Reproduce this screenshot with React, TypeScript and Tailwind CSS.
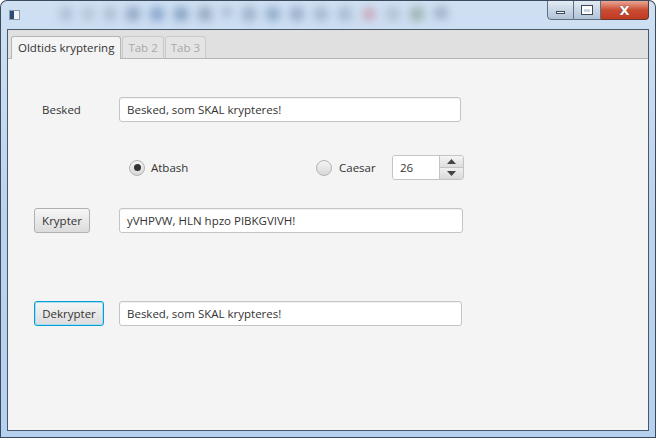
import React from "react";

const font = { fontFamily: '"Open Sans", "Noto Sans", sans-serif' };

function TextField({ value, w }: { value: string; w: string }) {
  return (
    <div
      className={`${w} h-[25px] flex items-center pl-[7px] bg-white border border-[#c4c4c4] rounded-[3px] shadow-[inset_0_1px_1px_rgba(0,0,0,0.06)] text-[11.5px] text-[#333333]`}
    >
      {value}
    </div>
  );
}

function Button({ label, w, focused }: { label: string; w: string; focused?: boolean }) {
  return (
    <div
      className={`${w} h-[25px] flex items-center justify-center rounded-[3px] text-[11.5px] text-[#333333] bg-gradient-to-b from-[#f6f6f6] to-[#dcdcdc] ${
        focused
          ? "border border-[#039ed3] shadow-[inset_0_0_0_1px_#a9dcf0]"
          : "border border-[#b0b0b0]"
      }`}
    >
      {label}
    </div>
  );
}

function Radio({ checked }: { checked?: boolean }) {
  return (
    <div className="w-[16px] h-[16px] shrink-0 rounded-full border border-[#b4b4b4] bg-gradient-to-b from-[#f4f4f4] to-[#d8d8d8] flex items-center justify-center">
      {checked && <div className="w-[7px] h-[7px] rounded-full bg-[#333333]" />}
    </div>
  );
}

export default function App() {
  return (
    <div className="w-[656px] h-[438px] bg-[#3b4a5c] p-[1px] rounded-t-[7px] overflow-hidden" style={font}>
      <div className="w-full h-full rounded-t-[6px] bg-gradient-to-b from-[#cfe0f3] via-[#bcd3ee] to-[#b6d1ef] flex flex-col">
        {/* title bar */}
        <div className="h-[28px] flex items-start relative overflow-hidden">
          <div className="mt-[9px] ml-[8px] w-[11px] h-[10px] flex border border-[#8a9aa8] bg-white">
            <div className="w-[4px] h-full bg-[#2c4c78]" />
            <div className="flex-1 bg-[#f2f4f5]" />
          </div>
          <div className="ml-[40px] mt-[6px] flex gap-[10px] blur-[4px] opacity-60">
            <div className="w-[12px] h-[14px] bg-[#9aaac0] rounded-sm" />
            <div className="w-[12px] h-[14px] bg-[#a5b4c8] rounded-sm" />
            <div className="w-[12px] h-[14px] bg-[#9aaac0] rounded-sm" />
            <div className="w-[14px] h-[14px] bg-[#6d86a8] rounded-sm" />
            <div className="w-[14px] h-[14px] bg-[#5f84b8] rounded-sm" />
            <div className="w-[14px] h-[14px] bg-[#5f7fa8] rounded-sm" />
            <div className="w-[14px] h-[14px] bg-[#778aa2] rounded-sm" />
            <div className="w-[10px] h-[10px] bg-[#8da0ba] rounded-sm" />
            <div className="w-[14px] h-[14px] bg-[#7e96b0] rounded-sm" />
            <div className="w-[14px] h-[14px] bg-[#6d8fb2] rounded-sm" />
            <div className="w-[14px] h-[14px] bg-[#7b8fb0] rounded-sm" />
            <div className="w-[14px] h-[14px] bg-[#8aa0bb] rounded-sm" />
            <div className="w-[14px] h-[14px] bg-[#93a6bf] rounded-sm" />
            <div className="w-[14px] h-[14px] bg-[#c8879a] rounded-full" />
            <div className="w-[14px] h-[14px] bg-[#a0b0c4] rounded-sm" />
            <div className="w-[14px] h-[14px] bg-[#7e9a88] rounded-sm" />
            <div className="w-[14px] h-[12px] bg-[#8193ad] rounded-sm" />
          </div>
          <div className="ml-auto mr-[6px] flex h-[20px] -mt-[1px]">
            <div className="w-[27px] h-[20px] border border-[#5f6f82] rounded-bl-[4px] bg-gradient-to-b from-[#e4ecf5] via-[#c9d6e5] to-[#b2c3d8] flex items-center justify-center">
              <div className="w-[9px] h-[3px] mt-[5px] bg-white border border-[#3d4a5a]" />
            </div>
            <div className="w-[27px] h-[20px] border-y border-r border-[#5f6f82] bg-gradient-to-b from-[#e4ecf5] via-[#c9d6e5] to-[#b2c3d8] flex items-center justify-center">
              <div className="w-[10px] h-[8px] border-[2px] border-t-[3px] border-white outline outline-1 outline-[#3d4a5a]" />
            </div>
            <div className="w-[48px] h-[20px] border-y border-r border-[#5f3a32] rounded-br-[4px] bg-gradient-to-b from-[#e8a593] via-[#c94c33] to-[#c23a22] flex items-center justify-center">
              <span className="text-white font-bold text-[13px] leading-none" style={{ fontFamily: '"DejaVu Sans", sans-serif', textShadow: "0 0 1px #333" }}>
                X
              </span>
            </div>
          </div>
        </div>
        {/* client */}
        <div className="flex-1 px-[6px] pb-[6px] flex">
          <div className="flex-1 border border-[#4a5869] flex flex-col bg-[#f4f4f4] overflow-hidden">
            {/* tab header */}
            <div className="h-[29px] bg-[#e0e0e0] border-b border-[#b6b6b6] flex items-end pl-[3px] gap-[1px]">
              <div className="h-[23px] -mb-[1px] px-[6px] flex items-center bg-[#f4f4f4] border border-b-0 border-[#b6b6b6] rounded-t-[3px] text-[11.5px] text-[#333333]">
                Oldtids kryptering
              </div>
              <div className="h-[22px] px-[5px] flex items-center bg-[#e4e4e4] border border-b-0 border-[#cacaca] rounded-t-[3px] text-[11.5px] text-[#a8a8a8]">
                Tab 2
              </div>
              <div className="h-[22px] px-[5px] flex items-center bg-[#e4e4e4] border border-b-0 border-[#cacaca] rounded-t-[3px] text-[11.5px] text-[#a8a8a8]">
                Tab 3
              </div>
            </div>
            {/* body */}
            <div className="flex flex-col pt-[38px]">
              <div className="flex items-center h-[25px]">
                <div className="w-[111px] pl-[34px] text-[11.5px] text-[#333333]">Besked</div>
                <TextField value="Besked, som SKAL krypteres!" w="w-[342px]" />
              </div>
              <div className="flex items-center h-[25px] mt-[33px]">
                <div className="w-[121px] shrink-0" />
                <div className="w-[187px] shrink-0 flex items-center">
                  <Radio checked />
                  <span className="ml-[6px] text-[11.5px] text-[#333333]">Atbash</span>
                </div>
                <div className="w-[76px] shrink-0 flex items-center">
                  <Radio />
                  <span className="ml-[7px] text-[11.5px] text-[#333333]">Caesar</span>
                </div>
                <div className="w-[72px] h-[25px] flex border border-[#c4c4c4] rounded-[3px] overflow-hidden">
                  <div className="flex-1 bg-white flex items-center pl-[7px] text-[11.5px] text-[#333333]">26</div>
                  <div className="w-[24px] flex flex-col border-l border-[#c4c4c4]">
                    <div className="flex-1 bg-gradient-to-b from-[#f4f4f4] to-[#dedede] border-b border-[#c4c4c4] flex items-center justify-center">
                      <svg width="9" height="5" viewBox="0 0 9 5"><path d="M0 5 L4.5 0 L9 5 Z" fill="#444" /></svg>
                    </div>
                    <div className="flex-1 bg-gradient-to-b from-[#f0f0f0] to-[#dadada] flex items-center justify-center">
                      <svg width="9" height="5" viewBox="0 0 9 5"><path d="M0 0 L4.5 5 L9 0 Z" fill="#444" /></svg>
                    </div>
                  </div>
                </div>
              </div>
              <div className="flex items-center h-[25px] mt-[28px]">
                <div className="w-[111px] pl-[26px]">
                  <Button label="Krypter" w="w-[56px]" />
                </div>
                <TextField value="yVHPVW, HLN hpzo PIBKGVIVH!" w="w-[344px]" />
              </div>
              <div className="flex items-center h-[25px] mt-[68px]">
                <div className="w-[111px] pl-[26px]">
                  <Button label="Dekrypter" w="w-[70px]" focused />
                </div>
                <TextField value="Besked, som SKAL krypteres!" w="w-[343px]" />
              </div>
            </div>
          </div>
        </div>
      </div>
    </div>
  );
}
